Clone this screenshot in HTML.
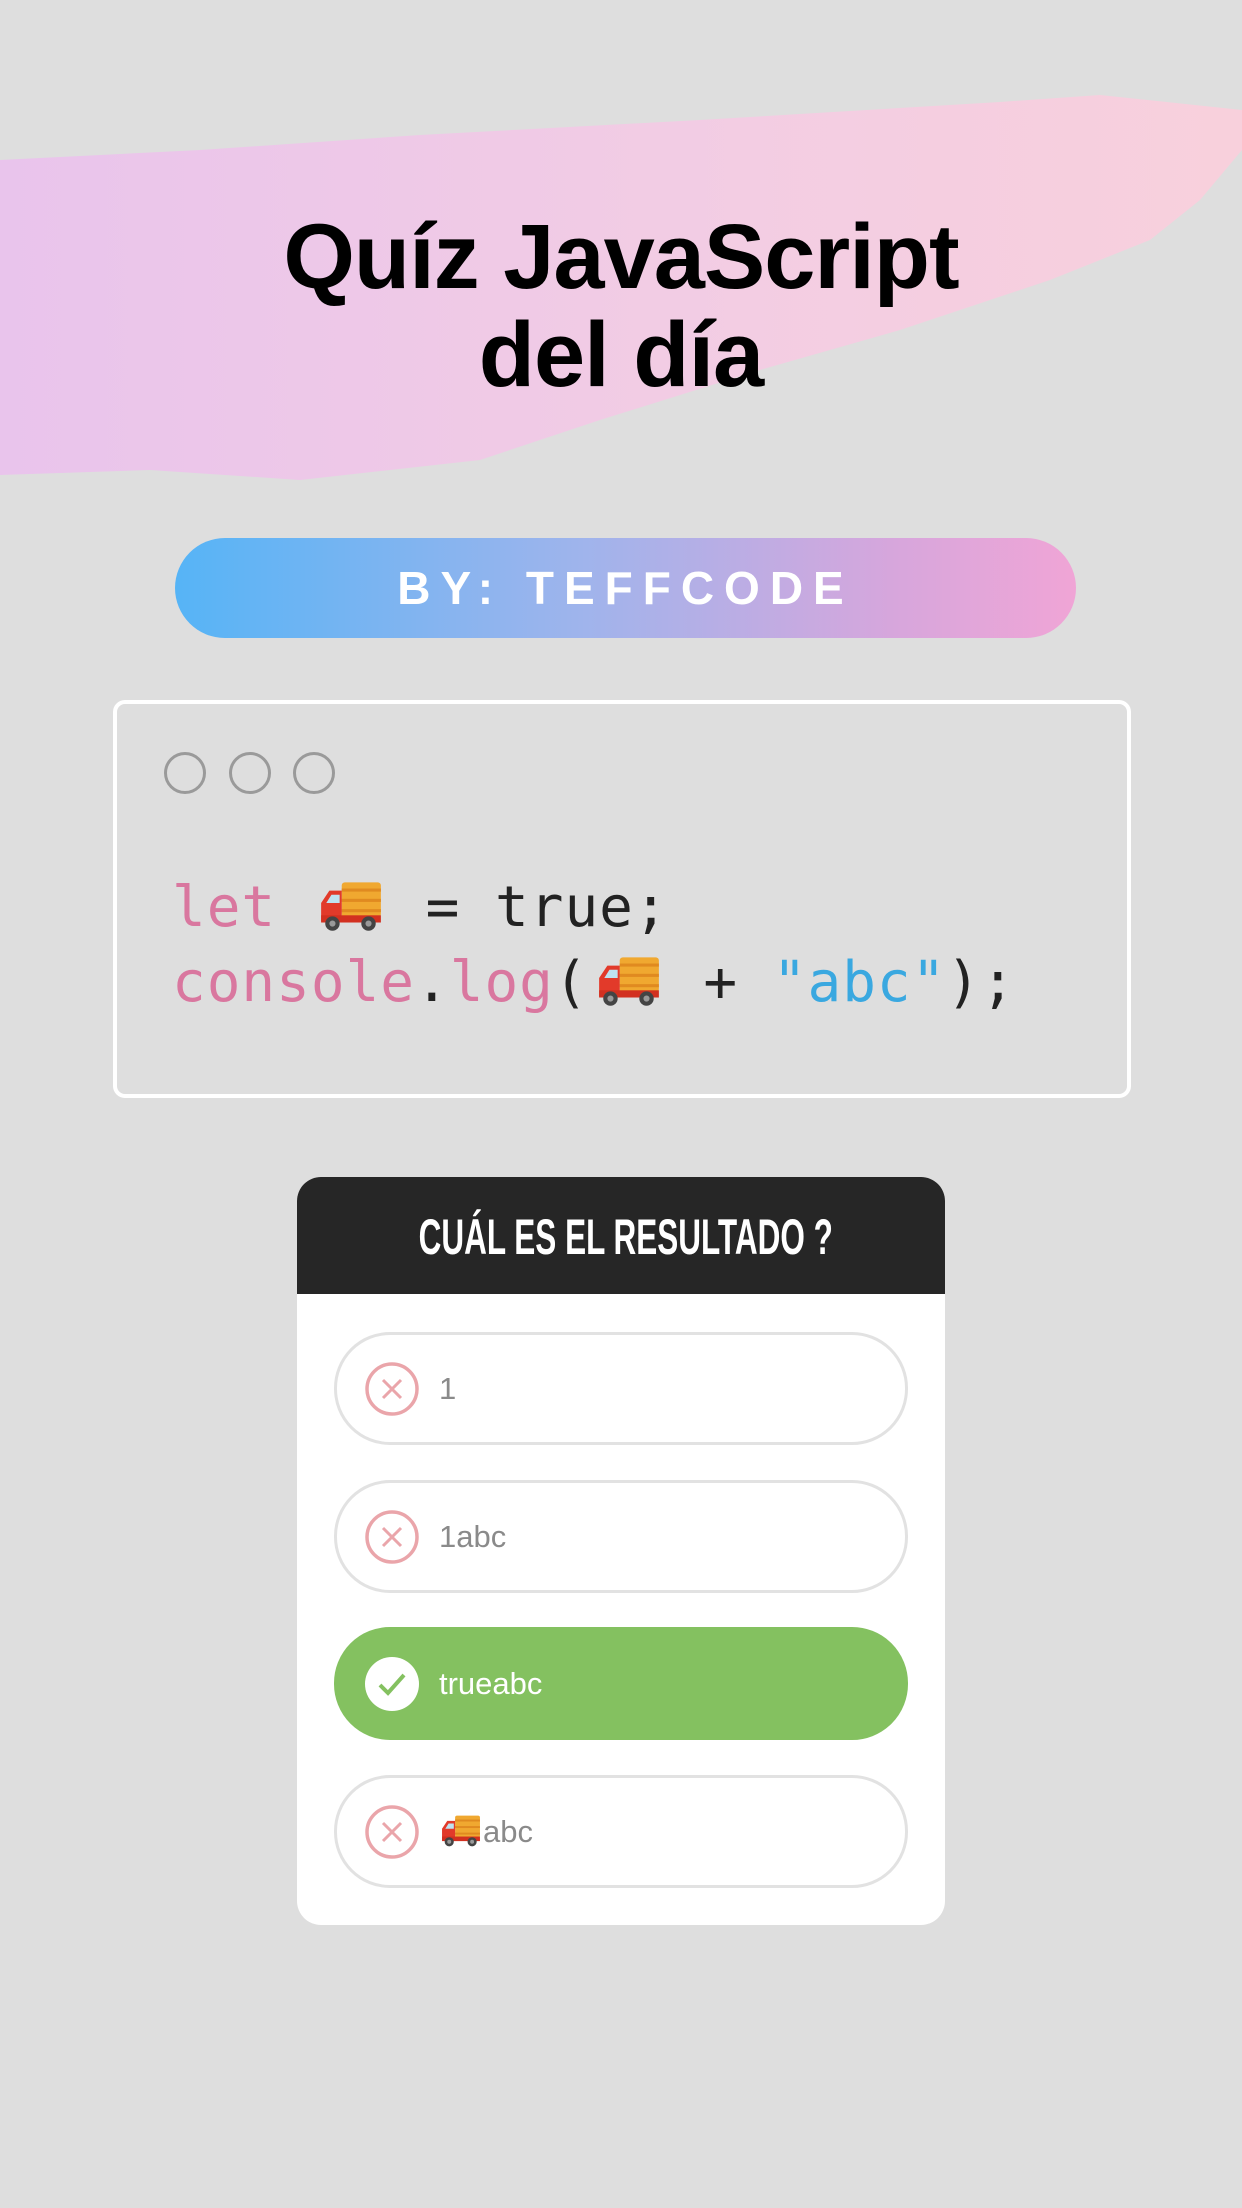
<!DOCTYPE html>
<html><head><meta charset="utf-8"><style>
html,body{margin:0;padding:0;}
body{width:1242px;height:2208px;background:#dedede;position:relative;overflow:hidden;font-family:"Liberation Sans",sans-serif;}
.abs{position:absolute;}
.title{left:0;width:1242px;text-align:center;font-weight:bold;color:#000;font-size:92px;line-height:98px;top:208px;letter-spacing:-1px;}
.pill{left:175px;top:538px;width:901px;height:100px;border-radius:50px;background:linear-gradient(90deg,#56b4f6 0%,#9fb4ec 45%,#d7a6dc 80%,#f0a5d6 100%);color:#fff;font-size:46px;font-weight:bold;letter-spacing:10px;text-align:center;line-height:100px;}
.code{left:113px;top:700px;width:1010px;height:390px;border:4px solid #fff;border-radius:12px;}
.dot{width:36px;height:36px;border:3.5px solid #9a9a9a;border-radius:50%;top:752px;}
.ln{left:172px;font-family:"DejaVu Sans Mono","Liberation Mono",monospace;font-size:56px;letter-spacing:1px;color:#222;white-space:pre;}
.k{color:#d9779f}.s{color:#3aa8e0}
.truck{display:inline-block;width:68px;height:54px;vertical-align:-6px;margin:0 6px;}
.card{left:297px;top:1177px;width:648px;height:748px;background:#fff;border-radius:24px;overflow:hidden;}
.hd{height:117px;background:#262626;color:#fff;text-align:center;line-height:120px;}
.hd span{display:inline-block;font-size:50px;font-weight:bold;transform:scaleX(0.63);white-space:nowrap;}
.opt{left:37px;width:568px;height:107px;border:3px solid #e2e2e2;border-radius:56px;}
.opt .t{position:absolute;left:102px;top:0;line-height:107px;font-size:31px;color:#8a8a8a;}
.opt svg{position:absolute;left:27px;top:26px;}
</style></head><body>
<svg class="abs" style="left:0;top:90px" width="1242" height="420" viewBox="0 0 1242 420">
<defs><linearGradient id="bg" x1="0" x2="1"><stop offset="0" stop-color="#e9c4ec"/><stop offset="0.6" stop-color="#f3cde3"/><stop offset="1" stop-color="#f8d0dc"/></linearGradient></defs>
<path d="M0 70 L200 60 L420 45 L700 30 L1000 12 L1100 5 L1242 20 L1242 60 L1200 110 L1150 150 L1050 190 L900 240 L760 280 L600 330 L480 370 L300 390 L150 380 L0 385 Z" fill="url(#bg)"/>
</svg>
<div class="abs title">Quíz JavaScript<br>del día</div>
<div class="abs pill">BY: TEFFCODE</div>
<div class="abs code"></div>
<div class="abs dot" style="left:164px"></div>
<div class="abs dot" style="left:229px"></div>
<div class="abs dot" style="left:293px"></div>
<svg width="0" height="0" style="position:absolute"><defs><g id="tr">
<rect x="24" y="4" width="38" height="34" rx="3" fill="#f0a830"/>
<rect x="24" y="10" width="38" height="3" fill="#e08a20"/><rect x="24" y="20" width="38" height="3" fill="#e08a20"/><rect x="24" y="30" width="38" height="3" fill="#e08a20"/>
<path d="M4 24 L12 12 L24 12 L24 42 L4 42 Z" fill="#e23a2a"/>
<path d="M9 24 L14 16 L22 16 L22 24 Z" fill="#bfe2f0"/>
<rect x="4" y="36" width="58" height="7" fill="#d23020"/>
<circle cx="15" cy="44" r="7" fill="#444"/><circle cx="15" cy="44" r="3" fill="#999"/>
<circle cx="50" cy="44" r="7" fill="#444"/><circle cx="50" cy="44" r="3" fill="#999"/>
</g></defs></svg>
<div class="abs ln" style="top:875px"><span class="k">let</span> <svg class="truck" viewBox="0 0 66 52"><use href="#tr"/></svg> = true;</div>
<div class="abs ln" style="top:950px"><span class="k">console</span>.<span class="k">log</span>(<svg class="truck" viewBox="0 0 66 52"><use href="#tr"/></svg> + <span class="s">"abc"</span>);</div>
<div class="abs card">
<div class="hd"><span>CUÁL ES EL RESULTADO ?</span></div>
<div class="abs opt" style="top:155px"><svg width="56" height="56" viewBox="0 0 56 56"><circle cx="28" cy="28" r="25" fill="none" stroke="#eaa5aa" stroke-width="3.5"/><path d="M19 19 L37 37 M37 19 L19 37" stroke="#eaa5aa" stroke-width="3"/></svg><div class="t">1</div></div>
<div class="abs opt" style="top:303px"><svg width="56" height="56" viewBox="0 0 56 56"><circle cx="28" cy="28" r="25" fill="none" stroke="#eaa5aa" stroke-width="3.5"/><path d="M19 19 L37 37 M37 19 L19 37" stroke="#eaa5aa" stroke-width="3"/></svg><div class="t">1abc</div></div>
<div class="abs opt" style="top:450px;background:#84c160;border-color:#84c160"><svg width="56" height="56" viewBox="0 0 56 56"><circle cx="28" cy="28" r="27" fill="#fff"/><path d="M16 29 L24 37 L40 19" fill="none" stroke="#84c160" stroke-width="4"/></svg><div class="t" style="color:#fff">trueabc</div></div>
<div class="abs opt" style="top:598px"><svg width="56" height="56" viewBox="0 0 56 56"><circle cx="28" cy="28" r="25" fill="none" stroke="#eaa5aa" stroke-width="3.5"/><path d="M19 19 L37 37 M37 19 L19 37" stroke="#eaa5aa" stroke-width="3"/></svg><div class="t"><svg style="position:static;display:inline-block;width:44px;height:34px;vertical-align:-5px" viewBox="0 0 66 52"><use href="#tr"/></svg>abc</div></div>
</div>
</body></html>
